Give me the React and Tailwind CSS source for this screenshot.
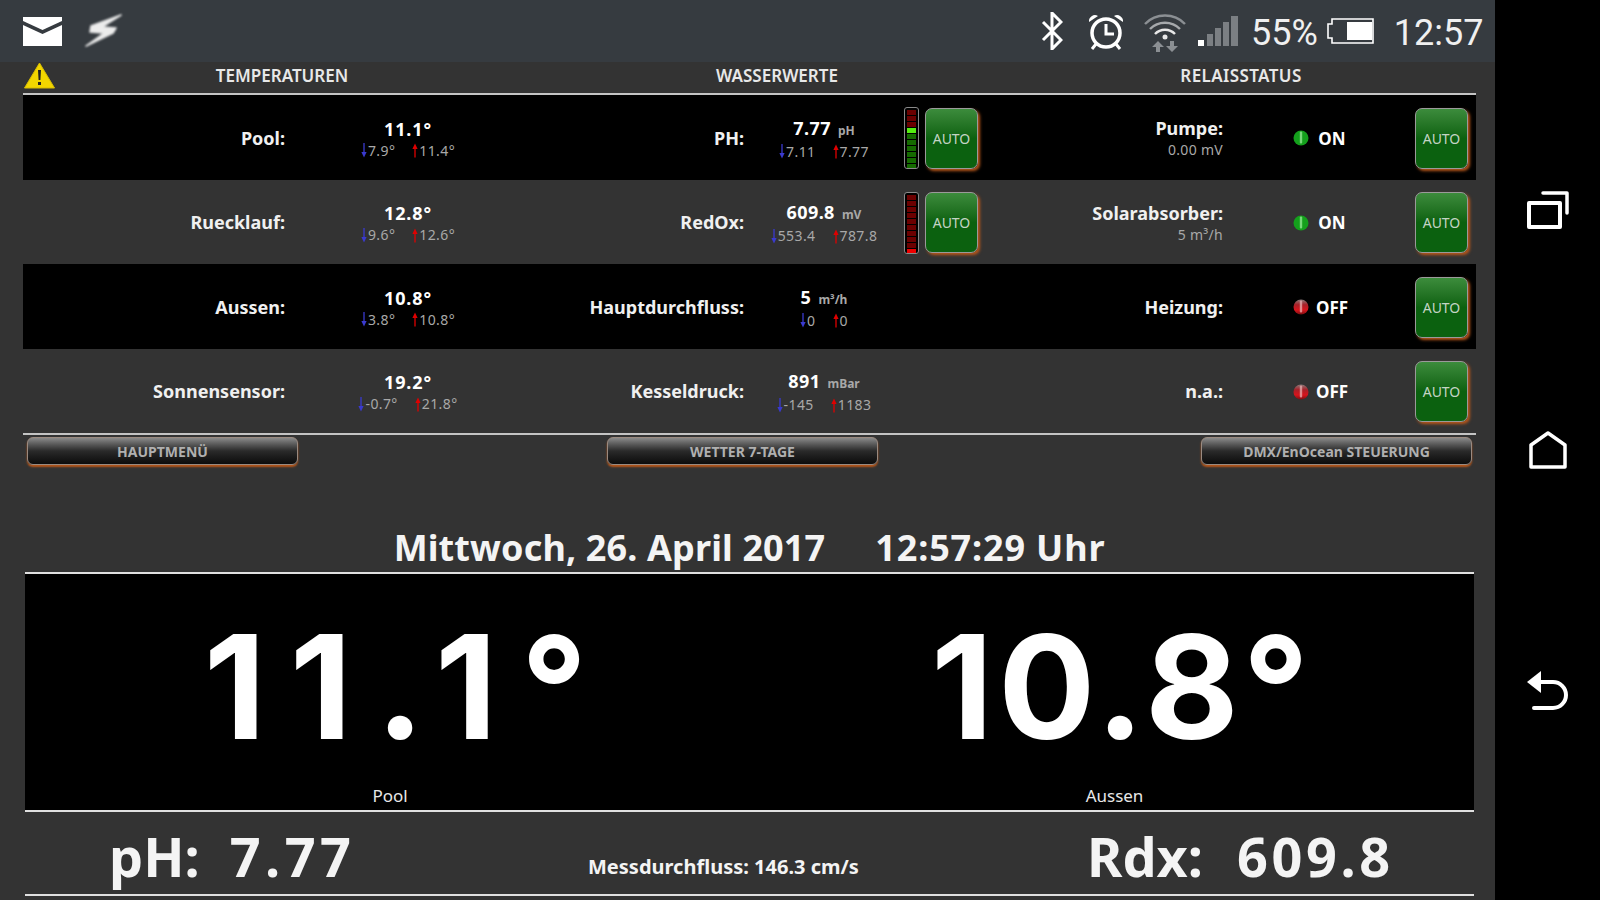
import React from 'react';

const rows = [
  {
    label: 'Pool:', value: '11.1°', low: '7.9°', high: '11.4°',
    label2: 'PH:', value2: '7.77', unit: 'pH', low2: '7.11', high2: '7.77', bar: 'ph', auto2: true,
    label3: 'Pumpe:', sub: '0.00 mV', on: true, black: true,
  },
  {
    label: 'Ruecklauf:', value: '12.8°', low: '9.6°', high: '12.6°',
    label2: 'RedOx:', value2: '609.8', unit: 'mV', low2: '553.4', high2: '787.8', bar: 'rx', auto2: true,
    label3: 'Solarabsorber:', sub: '5 m³/h', on: true,
  },
  {
    label: 'Aussen:', value: '10.8°', low: '3.8°', high: '10.8°',
    label2: 'Hauptdurchfluss:', value2: '5', unit: 'm³/h', low2: '0', high2: '0',
    label3: 'Heizung:', on: false, black: true,
  },
  {
    label: 'Sonnensensor:', value: '19.2°', low: '-0.7°', high: '21.8°',
    label2: 'Kesseldruck:', value2: '891', unit: 'mBar', low2: '-145', high2: '1183',
    label3: 'n.a.:', on: false,
  },
];

const barColors = {
  ph: ['bg-[#6b0000]', 'bg-[#6b0000]', 'bg-[#6b0000]', 'bg-[#55ee11]', 'bg-[#156b00]', 'bg-[#156b00]', 'bg-[#156b00]', 'bg-[#156b00]', 'bg-[#156b00]', 'bg-[#156b00]'],
  rx: ['bg-[#6b0000]', 'bg-[#6b0000]', 'bg-[#6b0000]', 'bg-[#6b0000]', 'bg-[#6b0000]', 'bg-[#6b0000]', 'bg-[#6b0000]', 'bg-[#6b0000]', 'bg-[#6b0000]', 'bg-[#ee0000]'],
};

const DownArrow = () => (
  <svg width="6" height="15" viewBox="0 0 6 15" className="shrink-0">
    <path d="M3 0v10" stroke="#3a3ad0" strokeWidth="1.3" />
    <path d="M0.4 9h5.2L3 14.5z" fill="#3a3ad0" />
  </svg>
);

const UpArrow = () => (
  <svg width="6" height="15" viewBox="0 0 6 15" className="shrink-0">
    <path d="M3 14.5V5" stroke="#e00000" strokeWidth="1.3" />
    <path d="M0.4 6h5.2L3 0.5z" fill="#e00000" />
  </svg>
);

const MinMax = ({ low, high }) => (
  <div className="mt-px flex justify-center gap-[17px] text-[14px] leading-[18px] tracking-[0.4px] text-[#a8a8a8]">
    <span className="flex items-center gap-px"><DownArrow />{low}</span>
    <span className="flex items-center gap-px"><UpArrow />{high}</span>
  </div>
);

const AutoButton = () => (
  <div className="flex h-[61px] w-[53px] shrink-0 items-center justify-center rounded-[7px] border border-[#9a9a9a] bg-gradient-to-b from-[#3c8c3c] via-[#0b610f] to-[#0b610f] text-[14px] text-[#c4d4c4] shadow-[2px_2px_3px_#b5561a]">
    AUTO
  </div>
);

const LedBar = ({ type }) => (
  <div className="flex h-[62px] w-[15px] shrink-0 flex-col gap-px overflow-hidden rounded-[3px] border border-[#8a8a8a] bg-black p-[2px]">
    {barColors[type].map((c, i) => (
      <div key={i} className={`h-[5px] w-full shrink-0 ${c}`} />
    ))}
  </div>
);

const Led = ({ on }) => (
  <svg width="16" height="16" viewBox="0 0 16 16" className="shrink-0">
    <defs>
      <linearGradient id="ledOff" x1="0" y1="0" x2="0" y2="1">
        <stop offset="0%" stopColor="#8a7a7a" />
        <stop offset="35%" stopColor="#a82028" />
        <stop offset="70%" stopColor="#d8141c" />
        <stop offset="100%" stopColor="#7a0f12" />
      </linearGradient>
    </defs>
    <circle cx="8" cy="8" r="7.5" fill={on ? '#14a01c' : 'url(#ledOff)'} />
    <rect x="6.8" y="1.5" width="2.4" height="12" rx="1" fill={on ? '#9aeb9a' : '#e8b0b0'} opacity="0.75" />
  </svg>
);

const Row = ({ r }) => (
  <div className={`flex h-[84.5px] items-center pt-[2px] ${r.black ? 'bg-black' : ''}`}>
    <div className="w-[262px] shrink-0 text-right text-[18px] font-bold text-[#f0f0f0]">{r.label}</div>
    <div className="w-[246px] shrink-0 pt-px text-center">
      <div className="text-[18px] leading-[23px] font-bold tracking-[0.9px] text-white">{r.value}</div>
      <MinMax low={r.low} high={r.high} />
    </div>
    <div className="w-[213px] shrink-0 text-right text-[18px] font-bold text-[#f0f0f0]">{r.label2}</div>
    <div className="w-[160px] shrink-0 pt-px text-center">
      <div className="text-[18px] leading-[23px] font-bold tracking-[0.4px] text-white">
        {r.value2} <span className="ml-[2px] text-[12px] tracking-normal text-[#a8a8a8]">{r.unit}</span>
      </div>
      <MinMax low={r.low2} high={r.high2} />
    </div>
    <div className="flex w-[80px] shrink-0 items-center gap-[6px]">
      {r.bar && <LedBar type={r.bar} />}
      {r.auto2 && <AutoButton />}
    </div>
    <div className="w-[239px] shrink-0 text-right">
      <div className="text-[18px] leading-[23px] font-bold text-[#f0f0f0]">{r.label3}</div>
      {r.sub && <div className="mt-px text-[14px] leading-[18px] tracking-[0.3px] text-[#a8a8a8]">{r.sub}</div>}
    </div>
    <div className="flex w-[192px] shrink-0 items-center pl-[70px]">
      <Led on={r.on} />
      <span className="w-[46px] text-center text-[17px] font-bold text-white">{r.on ? 'ON' : 'OFF'}</span>
    </div>
    <AutoButton />
  </div>
);

const NavButton = ({ children, className }) => (
  <div className={`flex h-[28px] w-[271px] shrink-0 items-center justify-center rounded-[6px] border border-[#9a8a80] bg-gradient-to-b from-[#8a8a8a] via-[#2a2a2a] to-[#0c0c0c] text-[14px] font-bold text-[#b0b0b0] shadow-[0_2px_2px_#b5561a] ${className}`}>
    {children}
  </div>
);

const StatusBar = () => (
  <div className="flex h-[62px] shrink-0 items-center bg-[#363b40] pl-[23px]">
    <svg width="39" height="29" viewBox="0 0 39 29">
      <path d="M0 0h39v4L19.5 13 0 4z" fill="#fff" />
      <path d="M0 8l19.5 9L39 8v21H0z" fill="#fff" />
    </svg>
    <svg width="38" height="34" viewBox="0 0 38 34" className="ml-[23px] blur-[1px]">
      <path d="M36 1L6 12 5 18 19 19 1 32 28 19 31 14 17 13z" fill="#ececec" stroke="#ececec" strokeWidth="1.5" strokeLinejoin="round" />
    </svg>
    <svg width="22" height="38" viewBox="0 0 22 38" className="ml-[918px]">
      <path d="M2 10l18 18-9 9V1l9 9L2 28" fill="none" stroke="#fff" strokeWidth="3" />
    </svg>
    <svg width="40" height="38" viewBox="0 0 40 38" className="ml-[23px]">
      <circle cx="20" cy="21" r="14" fill="none" stroke="#fff" strokeWidth="3.5" />
      <path d="M20 12v10h8" fill="none" stroke="#fff" strokeWidth="3" />
      <path d="M3 10a6 6 0 0 1 9-6zM37 10a6 6 0 0 0-9-6z" fill="#fff" />
      <path d="M10 32l-4 5M30 32l4 5" stroke="#fff" strokeWidth="3" />
    </svg>
    <svg width="44" height="42" viewBox="0 0 44 42" className="ml-[17px]">
      <path d="M2 14a28 28 0 0 1 40 0" fill="none" stroke="#8b8f93" strokeWidth="2.5" />
      <path d="M7 19a21 21 0 0 1 30 0" fill="none" stroke="#a6a9ac" strokeWidth="2.5" />
      <path d="M12 24a14 14 0 0 1 20 0" fill="none" stroke="#e8e8e8" strokeWidth="2.5" />
      <circle cx="22" cy="27" r="2.5" fill="#e8e8e8" />
      <path d="M15 31l6 6h-4v5h-4v-5H9zM29 42l6-6h-4v-5h-4v5h-4z" fill="#8b8f93" />
    </svg>
    <svg width="40" height="30" viewBox="0 0 40 30" className="ml-[11px]">
      <rect x="0" y="24" width="6" height="6" fill="#fff" />
      <rect x="9" y="18" width="6" height="12" fill="#7b7f83" />
      <rect x="17" y="12" width="6" height="18" fill="#7b7f83" />
      <rect x="25" y="6" width="6" height="24" fill="#7b7f83" />
      <rect x="33" y="0" width="7" height="30" fill="#7b7f83" />
    </svg>
    <span className="mt-[3px] ml-[13px] font-['Roboto'] text-[36px] leading-none text-[#f0f0f0]">55%</span>
    <svg width="47" height="26" viewBox="0 0 47 26" className="ml-[9px]">
      <path d="M5 1h41v24H5v-5H1V6h4z" fill="none" stroke="#fff" strokeWidth="1.6" />
      <rect x="20" y="4" width="25" height="18" fill="#fff" />
    </svg>
    <span className="mt-[3px] ml-[20px] font-['Roboto'] text-[36px] leading-none text-[#f0f0f0]">12:57</span>
  </div>
);

const SideNav = () => (
  <div className="flex w-[105px] shrink-0 flex-col items-center gap-[202px] bg-black pt-[191px]">
    <svg width="42" height="38" viewBox="0 0 42 38">
      <path d="M2 12h31v24H2z" fill="none" stroke="#fff" strokeWidth="4" strokeLinejoin="round" />
      <path d="M16 2h24v20" fill="none" stroke="#fff" strokeWidth="3.5" strokeLinecap="round" strokeLinejoin="round" />
    </svg>
    <svg width="38" height="38" viewBox="0 0 38 38">
      <path d="M2 14L19 2l17 12v22H2z" fill="none" stroke="#fff" strokeWidth="3.5" strokeLinejoin="round" />
    </svg>
    <svg width="42" height="39" viewBox="0 0 42 39">
      <path d="M0 11L14 0v22z" fill="#fff" />
      <path d="M12 11h14a13 13 0 0 1 0 26H7" fill="none" stroke="#fff" strokeWidth="4" strokeLinecap="round" />
    </svg>
  </div>
);

export default function App() {
  return (
    <div className="flex h-[900px] w-[1600px] overflow-hidden bg-[#333333] font-['Noto_Sans',sans-serif]">
      <div className="flex w-[1495px] shrink-0 flex-col">
        <StatusBar />

        <div className="flex h-[31px] shrink-0 items-center pb-[4px] pl-[24px] text-[17px] font-semibold text-[#e8e8e8]">
          <svg width="31" height="27" viewBox="0 0 31 27" className="shrink-0">
            <path d="M15.5 1L30.5 26H0.5z" fill="#f2d600" stroke="#d8bd00" strokeLinejoin="round" />
            <path d="M14 8h3l-.6 10h-1.8zM14 20h3v3h-3z" fill="#222" />
          </svg>
          <div className="w-[454px] shrink-0 text-center">TEMPERATUREN</div>
          <div className="w-[536px] shrink-0 text-center">WASSERWERTE</div>
          <div className="w-[392px] shrink-0 text-center tracking-[0.4px]">RELAISSTATUS</div>
        </div>

        <div className="ml-[23px] w-[1453px] border-y-2 border-[#c4c4c4]">
          {rows.map((r) => <Row key={r.label} r={r} />)}
        </div>

        <div className="ml-[27px] mt-[2px] flex">
          <NavButton>HAUPTMENÜ</NavButton>
          <NavButton className="ml-[309px]">WETTER 7-TAGE</NavButton>
          <NavButton className="ml-[323px]">DMX/EnOcean STEUERUNG</NavButton>
        </div>

        <div className="ml-[25px] mt-[42px] flex h-[65px] w-[1449px] items-center justify-center gap-[50px] pt-[16px] text-[36px] font-bold text-[#f4f4f4]">
          <span className="tracking-[0.13px]">Mittwoch, 26. April 2017</span>
          <span className="tracking-[0.85px]">12:57:29 Uhr</span>
        </div>

        <div className="ml-[25px] flex h-[240px] w-[1449px] border-y-2 border-[#e0e0e0] bg-black text-white">
          <div className="flex w-[730px] shrink-0 flex-col items-center">
            <div className="mt-[28px] ml-[35px] font-['Inter',sans-serif] text-[144px] leading-[170px] font-bold tracking-[24px]">11.1°</div>
            <div className="mt-[11px] text-[17px] text-[#e8e8e8]">Pool</div>
          </div>
          <div className="flex flex-1 flex-col items-center">
            <div className="mt-[28px] ml-[16px] font-['Inter',sans-serif] text-[144px] leading-[170px] font-bold tracking-[5px]">10.8°</div>
            <div className="mt-[11px] text-[17px] text-[#e8e8e8]">Aussen</div>
          </div>
        </div>

        <div className="ml-[25px] flex h-[84px] w-[1449px] items-center border-b-2 border-[#e0e0e0] font-bold text-[#f4f4f4]">
          <div className="mt-[7px] ml-[84px] flex w-[479px] shrink-0 text-[54px]">
            <span>pH:</span>
            <span className="ml-[30px] tracking-[4.5px]">7.77</span>
          </div>
          <div className="mt-[28px] w-[499px] shrink-0 text-[20px]">Messdurchfluss: 146.3 cm/s</div>
          <div className="mt-[7px] flex text-[54px]">
            <span>Rdx:</span>
            <span className="ml-[34px] tracking-[3.6px]">609.8</span>
          </div>
        </div>
      </div>
      <SideNav />
    </div>
  );
}
